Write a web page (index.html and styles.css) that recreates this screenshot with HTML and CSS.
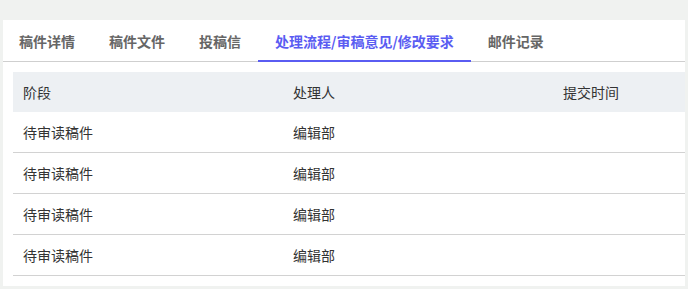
FILE: index.html
```html
<!DOCTYPE html>
<html lang="zh-CN">
<head>
    <meta charset="UTF-8">
    <meta name="viewport" content="width=device-width, initial-scale=1.0">
    <title>稿件处理流程</title>
    <link rel="stylesheet" href="styles.css">
</head>
<body>
    <div class="panel">
        <div class="tab-container">
            <div class="tab">稿件详情</div>
            <div class="tab">稿件文件</div>
            <div class="tab">投稿信</div>
            <div class="tab active">处理流程/审稿意见/修改要求</div>
            <div class="tab">邮件记录</div>
        </div>

        <div class="tab-content">
            <table class="flow-table">
                <thead>
                    <tr>
                        <th>阶段</th>
                        <th>处理人</th>
                        <th>提交时间</th>
                    </tr>
                </thead>
                <tbody>
                    <tr><td>待审读稿件</td><td>编辑部</td><td></td></tr>
                    <tr><td>待审读稿件</td><td>编辑部</td><td></td></tr>
                    <tr><td>待审读稿件</td><td>编辑部</td><td></td></tr>
                    <tr><td>待审读稿件</td><td>编辑部</td><td></td></tr>
                </tbody>
            </table>
        </div>
    </div>
</body>
</html>
```

FILE: styles.css
```css
body {
    font-family: "Noto Sans CJK SC", "Noto Sans", sans-serif;
    margin: 0;
    padding: 20px 3px 0;
    background-color: #f0f2f0;
    height: 289px;
    box-sizing: border-box;
    overflow: hidden;
}
.panel {
    background-color: white;
    overflow: hidden;
    padding-bottom: 10px;
}
.tab-container {
    display: flex;
    height: 41px;
    border-bottom: 1px solid #cfcfcf;
}
.tab {
    padding: 0 17px;
    font-size: 14px;
    font-weight: bold;
    color: #666;
    display: flex;
    align-items: center;
    white-space: nowrap;
    border-bottom: 2px solid transparent;
    margin-bottom: -1px;
    padding-top: 1px;
}
.tab:first-child {
    padding-left: 16px;
}
.tab.active {
    color: #5a5cf2;
    border-bottom-color: #5a5cf2;
}
.tab-content {
    padding: 10px 0 0 10px;
}
.flow-table {
    width: 810px;
    border-collapse: collapse;
    table-layout: fixed;
    font-size: 14px;
    color: #333;
}
.flow-table th,
.flow-table td {
    width: 250px;
    text-align: left;
    padding: 0 10px;
    height: 40px;
    font-weight: normal;
    white-space: nowrap;
}
.flow-table th {
    background-color: #edf0f3;
}
.flow-table td {
    border-bottom: 1px solid #d2d2d2;
}
```
